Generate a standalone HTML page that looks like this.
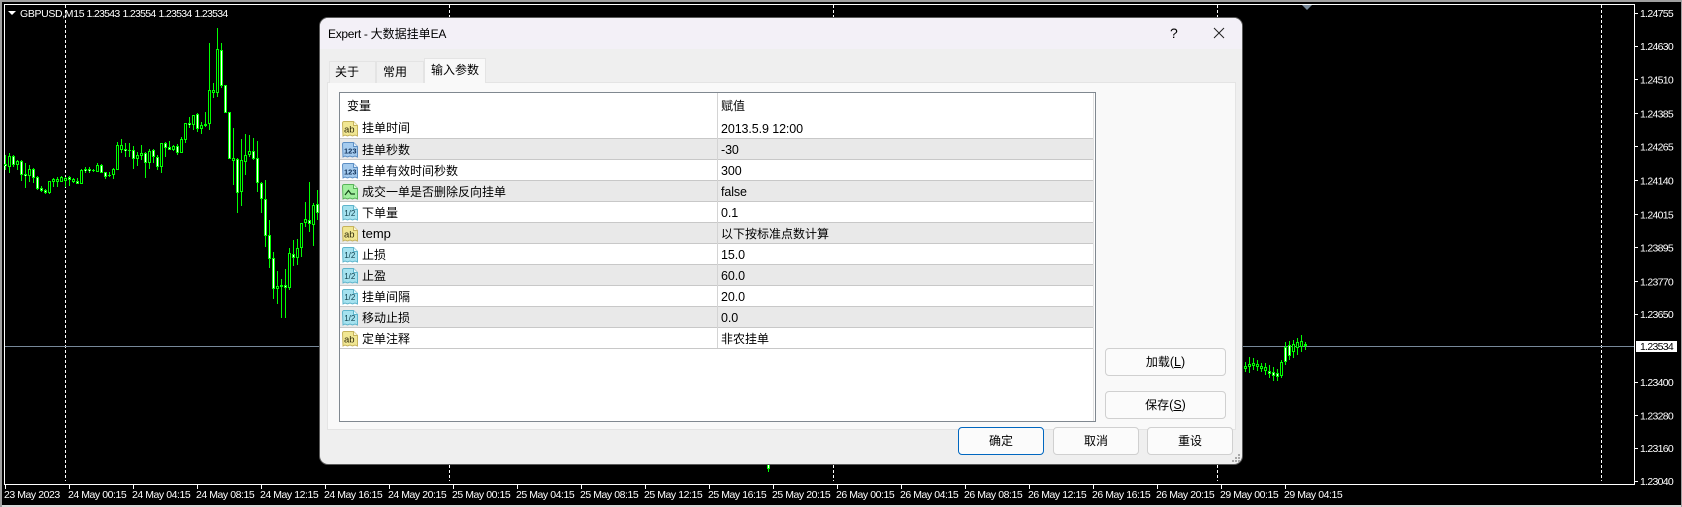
<!DOCTYPE html>
<html lang="zh">
<head>
<meta charset="utf-8">
<title>Expert</title>
<style>
html,body{margin:0;padding:0;background:#000;width:1682px;height:507px;overflow:hidden}
body{position:relative;font-family:"Liberation Sans","Noto Sans CJK SC",sans-serif;font-size:12px;color:#000}
svg.chart{position:absolute;left:0;top:0}
svg.chart text{font-family:"Liberation Sans",sans-serif;font-size:10.5px;fill:#fff;letter-spacing:-.7px}
svg.chart .t text{letter-spacing:-.45px}
.a{position:absolute;white-space:nowrap}
#dlg{position:absolute;left:320px;top:18px;width:922px;height:446px;background:#efefef;border-radius:8px;box-shadow:0 0 0 1px #5a5a5a}
#tb{position:absolute;left:320px;top:18px;width:922px;height:31px;background:#f3f0f7;border-radius:8px 8px 0 0}
.l{font-size:13px}
.ti{font-size:12px;letter-spacing:-.3px}
.tab{position:absolute;box-sizing:border-box;border:1px solid #e4e4e4;border-bottom:0;background:#f0f0f0;line-height:20px}
#panel{position:absolute;left:327px;top:82px;width:909px;height:348px;box-sizing:border-box;background:#f9f9f9;border:1px solid #e4e4e4}
#list{position:absolute;left:339px;top:92px;width:757px;height:330px;box-sizing:border-box;background:#fff;border:1px solid #808890}
.row{position:absolute;left:340px;width:754px;height:21px;box-sizing:border-box;border-bottom:1px solid #c8c8c8}
.alt{background:#e9e9e9}
.n{position:absolute;left:362px;line-height:20px;white-space:nowrap}
.v{position:absolute;left:721px;line-height:20px;white-space:nowrap}
.v.x{font-size:12.5px;letter-spacing:-.1px}
.row svg{position:absolute;left:2px;top:3px}
.btn{position:absolute;box-sizing:border-box;background:#fbfbfb;border:1px solid #d0d0d0;border-radius:4px;text-align:center;line-height:26px}
.btn u{text-underline-offset:1px}
.btn .p{font-size:12.5px}
</style>
</head>
<body>
<svg class="chart" width="1682" height="507" viewBox="0 0 1682 507" shape-rendering="crispEdges">
<rect x="0" y="0" width="1682" height="2" fill="#a0a0a0"/>
<rect x="0" y="505" width="1682" height="2" fill="#d8d8d8"/>
<rect x="0" y="0" width="2" height="507" fill="#a0a0a0"/>
<rect x="1681" y="0" width="1" height="507" fill="#a0a0a0"/>
<path d="M4.5 4.5H1634.5V484.5H4.5Z" fill="none" stroke="#fff"/>
<path d="M65.5 5V481M449.5 5V481M833.5 5V481M1217.5 5V481M1601.5 5V481" stroke="#fff" stroke-dasharray="3 2"/>
<path d="M5 346.5H1634" stroke="#778899"/>
<path d="M1302 5h10l-5 5z" fill="#778899" shape-rendering="auto"/>

<path fill="none" stroke="#00ff00" stroke-width="1" d="M5.5 155V170M9.5 153V173M13.5 155V167M17.5 160V170M21.5 160V181M25.5 163V188M29.5 165V182M33.5 168V183M37.5 176V190M41.5 186V192M45.5 189V194M49.5 181V194M53.5 178V187M57.5 177V187M61.5 176V182M65.5 177V187M69.5 176V186M73.5 178V183M77.5 178V184M81.5 169V184M85.5 167V173M89.5 167V173M93.5 169V172M97.5 163V172M101.5 164V173M105.5 172V179M109.5 172V177M113.5 168V179M117.5 142V170M121.5 139V153M125.5 143V157M129.5 143V157M133.5 146V169M137.5 152V166M141.5 145V160M145.5 152V178M149.5 149V169M153.5 149V163M157.5 155V170M161.5 143V173M165.5 142V157M169.5 141V150M173.5 145V151M177.5 144V155M181.5 137V153M185.5 123V143M189.5 117V128M193.5 115V130M197.5 113V132M201.5 122V134M205.5 112V127M209.5 43V130M213.5 83V98M217.5 28V97M221.5 43V88M225.5 85V113M229.5 112V159M233.5 128V185M237.5 158V213M241.5 139V206M245.5 134V175M249.5 135V157M253.5 138V160M257.5 141V192M261.5 182V213M265.5 180V247M269.5 220V268M273.5 252V299M277.5 271V304M281.5 279V318M285.5 269V318M289.5 248V290M293.5 240V266M297.5 239V265M301.5 223V257M305.5 202V227M309.5 182V232M313.5 203V246M317.5 190V220M768.5 464V472M1245.5 362V372M1249.5 357V373M1253.5 358V370M1257.5 360V371M1261.5 363V372M1265.5 363V375M1269.5 365V378M1273.5 367V381M1277.5 369V381M1281.5 360V378M1285.5 342V365M1289.5 341V360M1293.5 340V358M1297.5 338V355M1301.5 335V352M1305.5 342V350"/>
<path fill="none" stroke="#00ff00" stroke-width="3" d="M5.5 164V166M9.5 156V167M13.5 156V165M17.5 161V165M21.5 161V175M25.5 174V176M29.5 169V176M33.5 169V178M37.5 177V189M41.5 188V191M45.5 190V193M49.5 181V193M53.5 179V182M57.5 179V182M61.5 177V182M65.5 178V181M69.5 177V180M73.5 179V182M77.5 181V184M81.5 170V184M85.5 169V171M89.5 169V171M93.5 170V171M97.5 165V172M101.5 165V173M105.5 172V177M109.5 175V176M113.5 169V175M117.5 145V170M121.5 145V150M125.5 149V151M129.5 150V151M133.5 150V159M137.5 155V159M141.5 153V156M145.5 153V163M149.5 151V163M153.5 150V157M157.5 157V167M161.5 143V167M165.5 143V148M169.5 147V150M173.5 146V150M177.5 146V153M181.5 139V153M185.5 123V140M189.5 123V125M193.5 115V125M197.5 114V129M201.5 125V129M205.5 124V126M209.5 90V124M213.5 90V93M217.5 49V93M221.5 50V86M225.5 85V113M229.5 112V159M233.5 158V161M237.5 159V193M241.5 160V192M245.5 155V162M249.5 151V155M253.5 151V159M257.5 158V183M261.5 183V199M265.5 199V236M269.5 235V259M273.5 258V289M277.5 286V289M281.5 285V287M285.5 285V288M289.5 253V288M293.5 254V258M297.5 248V258M301.5 223V248M305.5 219V223M309.5 220V224M313.5 205V225M317.5 204V213M768.5 464V469M1245.5 366V369M1249.5 364V367M1253.5 363V366M1257.5 364V367M1261.5 366V369M1265.5 367V371M1269.5 371V374M1273.5 372V376M1277.5 373V377M1281.5 362V376M1285.5 347V362M1289.5 345V356M1293.5 344V352M1297.5 342V348M1301.5 341V347M1305.5 344V346"/>
<path fill="none" stroke="#ffffff" stroke-width="1" d="M5.5 165V166M13.5 157V164M21.5 162V174M25.5 175V176M33.5 170V177M37.5 178V188M41.5 189V190M45.5 191V192M69.5 178V179M77.5 182V183M85.5 170V171M89.5 170V171M101.5 166V172M105.5 173V176M125.5 150V151M133.5 151V158M145.5 154V162M153.5 151V156M157.5 158V166M165.5 144V147M169.5 148V149M177.5 147V152M189.5 124V125M197.5 115V128M221.5 51V85M225.5 86V112M229.5 113V158M237.5 160V192M253.5 152V158M257.5 159V182M261.5 184V198M265.5 200V235M269.5 236V258M273.5 259V288M285.5 286V287M293.5 255V257M309.5 221V223M317.5 205V212M768.5 465V468M1269.5 372V373M1273.5 373V375M1277.5 374V376M1285.5 348V361M1289.5 346V355"/>
<path fill="none" stroke="#000000" stroke-width="1" d="M9.5 157V166M17.5 162V164M29.5 170V175M49.5 182V192M53.5 180V181M57.5 180V181M61.5 178V181M65.5 179V180M73.5 180V181M81.5 171V183M97.5 166V171M113.5 170V174M117.5 146V169M121.5 146V149M137.5 156V158M141.5 154V155M149.5 152V162M161.5 144V166M173.5 147V149M181.5 140V152M185.5 124V139M193.5 116V124M201.5 126V128M209.5 91V123M213.5 91V92M217.5 50V92M233.5 159V160M241.5 161V191M245.5 156V161M249.5 152V154M277.5 287V288M289.5 254V287M297.5 249V257M301.5 224V247M305.5 220V222M313.5 206V224M1245.5 367V368M1249.5 365V366M1253.5 364V365M1257.5 365V366M1261.5 367V368M1265.5 368V370M1281.5 363V375M1293.5 345V351M1297.5 343V347M1301.5 342V346"/>

<rect x="1636" y="341" width="41" height="11" fill="#fff"/>
<path stroke="#fff" d="M1635 13.5h3M1635 46.5h3M1635 79.5h3M1635 113.5h3M1635 146.5h3M1635 180.5h3M1635 214.5h3M1635 247.5h3M1635 281.5h3M1635 314.5h3M1635 382.5h3M1635 415.5h3M1635 448.5h3M1635 481.5h3"/>
<path stroke="#fff" d="M5.5 485v4M69.5 485v4M133.5 485v4M197.5 485v4M261.5 485v4M325.5 485v4M389.5 485v4M453.5 485v4M517.5 485v4M581.5 485v4M645.5 485v4M709.5 485v4M773.5 485v4M837.5 485v4M901.5 485v4M965.5 485v4M1029.5 485v4M1093.5 485v4M1157.5 485v4M1221.5 485v4M1285.5 485v4"/>

<path d="M8 11h8l-4 4z" fill="#fff" shape-rendering="auto"/>
<g shape-rendering="auto">
<text x="20" y="17" style="letter-spacing:-.35px">GBPUSD,M15</text>
<text x="86.5" y="17">1.23543</text>
<text x="122.5" y="17">1.23554</text>
<text x="158.5" y="17">1.23534</text>
<text x="194.5" y="17">1.23534</text>

<text x="1640" y="17">1.24755</text>
<text x="1640" y="50">1.24630</text>
<text x="1640" y="83.5">1.24510</text>
<text x="1640" y="117.5">1.24385</text>
<text x="1640" y="150.5">1.24265</text>
<text x="1640" y="184.5">1.24140</text>
<text x="1640" y="218.5">1.24015</text>
<text x="1640" y="251.5">1.23895</text>
<text x="1640" y="285.5">1.23770</text>
<text x="1640" y="318">1.23650</text>
<text x="1640" y="350" style="fill:#000">1.23534</text>
<text x="1640" y="386">1.23400</text>
<text x="1640" y="419.5">1.23280</text>
<text x="1640" y="452">1.23160</text>
<text x="1640" y="485">1.23040</text>
<g class="t">
<text x="4" y="498">23 May 2023</text>
<text x="68" y="498">24 May 00:15</text>
<text x="132" y="498">24 May 04:15</text>
<text x="196" y="498">24 May 08:15</text>
<text x="260" y="498">24 May 12:15</text>
<text x="324" y="498">24 May 16:15</text>
<text x="388" y="498">24 May 20:15</text>
<text x="452" y="498">25 May 00:15</text>
<text x="516" y="498">25 May 04:15</text>
<text x="580" y="498">25 May 08:15</text>
<text x="644" y="498">25 May 12:15</text>
<text x="708" y="498">25 May 16:15</text>
<text x="772" y="498">25 May 20:15</text>
<text x="836" y="498">26 May 00:15</text>
<text x="900" y="498">26 May 04:15</text>
<text x="964" y="498">26 May 08:15</text>
<text x="1028" y="498">26 May 12:15</text>
<text x="1092" y="498">26 May 16:15</text>
<text x="1156" y="498">26 May 20:15</text>
<text x="1220" y="498">29 May 00:15</text>
<text x="1284" y="498">29 May 04:15</text>
</g>
</g>
</svg>

<svg width="0" height="0" style="position:absolute">
<defs>
<symbol id="ab" viewBox="0 0 16 16"><path d="M.5 2a1.500 1.500 0 0 1 1.500-1.500h9.500l4 4v10.500l-2.500-1-2.500 1-2.500-1-2.500 1-2.500-1-2 1z" fill="#f1e793" stroke="#c6b35c"/><path d="M11.500 .5v4h4" fill="#fdf8d8" stroke="#c6b35c"/><text x="2" y="11.500" font-family="Liberation Sans" font-size="9.500" fill="#2e2a0c">ab</text></symbol>
<symbol id="num" viewBox="0 0 16 16"><path d="M.5 2a1.500 1.500 0 0 1 1.500-1.500h9.500l4 4v10.500l-2.500-1-2.500 1-2.500-1-2.500 1-2.500-1-2 1z" fill="#a5cbee" stroke="#5d8fc4"/><path d="M11.500 .5v4h4" fill="#e3f0fb" stroke="#5d8fc4"/><text x="2" y="11.500" font-family="Liberation Sans" font-size="7.500" font-weight="bold" fill="#12325a">123</text></symbol>
<symbol id="bool" viewBox="0 0 16 16"><path d="M.5 2a1.500 1.500 0 0 1 1.500-1.500h9.500l4 4v10.500l-2.500-1-2.500 1-2.500-1-2.500 1-2.500-1-2 1z" fill="#a2ef9f" stroke="#59b45a"/><path d="M11.500 .5v4h4" fill="#e2fbe0" stroke="#59b45a"/><path d="M3 11l3.500-4.500 2.500 3.500h4" fill="none" stroke="#17491b" stroke-width="1.200"/></symbol>
<symbol id="dbl" viewBox="0 0 16 16"><path d="M.5 2a1.500 1.500 0 0 1 1.500-1.500h9.500l4 4v10.500l-2.500-1-2.500 1-2.500-1-2.500 1-2.500-1-2 1z" fill="#a5e2ef" stroke="#5fb5cc"/><path d="M11.500 .5v4h4" fill="#e2f8fc" stroke="#5fb5cc"/><text x="2.200" y="11" font-family="Liberation Sans" font-size="8" fill="#12424f">1/2</text></symbol>
</defs>
</svg>

<div id="dlg"></div>
<div id="tb"></div>
<div class="a" style="left:328px;top:25px;line-height:18px"><span class="ti">Expert - </span>大数据挂单<span class="ti">EA</span></div>
<div class="a" style="left:1170px;top:24px;font-size:14px;line-height:18px">?</div>
<svg class="a" style="left:1213px;top:27px" width="12" height="12" viewBox="0 0 12 12"><path d="M1 1L11 11M11 1L1 11" stroke="#222" stroke-width="1" fill="none"/></svg>

<div id="panel"></div>
<div class="tab" style="left:329px;top:61px;width:47px;height:22px;padding-left:5px">关于</div>
<div class="tab" style="left:376px;top:61px;width:48px;height:22px;padding-left:6px">常用</div>
<div class="tab" style="left:424px;top:58px;width:62px;height:25px;background:#f9f9f9;line-height:22px;padding-left:6px">输入参数</div>

<div id="list"></div>
<div class="a" style="left:347px;top:96px;line-height:20px">变量</div>
<div class="a" style="left:721px;top:96px;line-height:20px">赋值</div>

<div class="row" style="top:118px"><svg width="16" height="16"><use href="#ab"/></svg></div>
<div class="row alt" style="top:139px"><svg width="16" height="16"><use href="#num"/></svg></div>
<div class="row" style="top:160px"><svg width="16" height="16"><use href="#num"/></svg></div>
<div class="row alt" style="top:181px"><svg width="16" height="16"><use href="#bool"/></svg></div>
<div class="row" style="top:202px"><svg width="16" height="16"><use href="#dbl"/></svg></div>
<div class="row alt" style="top:223px"><svg width="16" height="16"><use href="#ab"/></svg></div>
<div class="row" style="top:244px"><svg width="16" height="16"><use href="#dbl"/></svg></div>
<div class="row alt" style="top:265px"><svg width="16" height="16"><use href="#dbl"/></svg></div>
<div class="row" style="top:286px"><svg width="16" height="16"><use href="#dbl"/></svg></div>
<div class="row alt" style="top:307px"><svg width="16" height="16"><use href="#dbl"/></svg></div>
<div class="row" style="top:328px"><svg width="16" height="16"><use href="#ab"/></svg></div>
<div class="a" style="left:717px;top:93px;width:1px;height:255px;background:#d4d4d4"></div>
<div class="a" style="left:1093px;top:93px;width:1px;height:328px;background:#e2e2e2"></div>

<div class="n" style="top:118px">挂单时间</div><div class="v x" style="top:119px">2013.5.9 12:00</div>
<div class="n" style="top:140px">挂单秒数</div><div class="v x" style="top:140px">-30</div>
<div class="n" style="top:161px">挂单有效时间秒数</div><div class="v x" style="top:161px">300</div>
<div class="n" style="top:182px">成交一单是否删除反向挂单</div><div class="v x" style="top:182px">false</div>
<div class="n" style="top:203px">下单量</div><div class="v x" style="top:203px">0.1</div>
<div class="n l" style="top:224px">temp</div><div class="v" style="top:224px">以下按标准点数计算</div>
<div class="n" style="top:245px">止损</div><div class="v x" style="top:245px">15.0</div>
<div class="n" style="top:266px">止盈</div><div class="v x" style="top:266px">60.0</div>
<div class="n" style="top:287px">挂单间隔</div><div class="v x" style="top:287px">20.0</div>
<div class="n" style="top:308px">移动止损</div><div class="v x" style="top:308px">0.0</div>
<div class="n" style="top:329px">定单注释</div><div class="v" style="top:329px">非农挂单</div>

<div class="btn" style="left:1105px;top:348px;width:121px;height:28px">加载<span class="p">(<u>L</u>)</span></div>
<div class="btn" style="left:1105px;top:391px;width:121px;height:28px">保存<span class="p">(<u>S</u>)</span></div>
<div class="btn" style="left:958px;top:427px;width:86px;height:28px;border-color:#0067c0">确定</div>
<div class="btn" style="left:1053px;top:427px;width:86px;height:28px">取消</div>
<div class="btn" style="left:1147px;top:427px;width:86px;height:28px">重设</div>

<svg class="a" style="left:1232px;top:454px" width="9" height="9" viewBox="0 0 9 9" shape-rendering="crispEdges"><path fill="#a8a8a8" d="M6 0h2v2H6zM3 3h2v2H3zM6 3h2v2H6zM0 6h2v2H0zM3 6h2v2H3zM6 6h2v2H6z"/></svg>
</body>
</html>
